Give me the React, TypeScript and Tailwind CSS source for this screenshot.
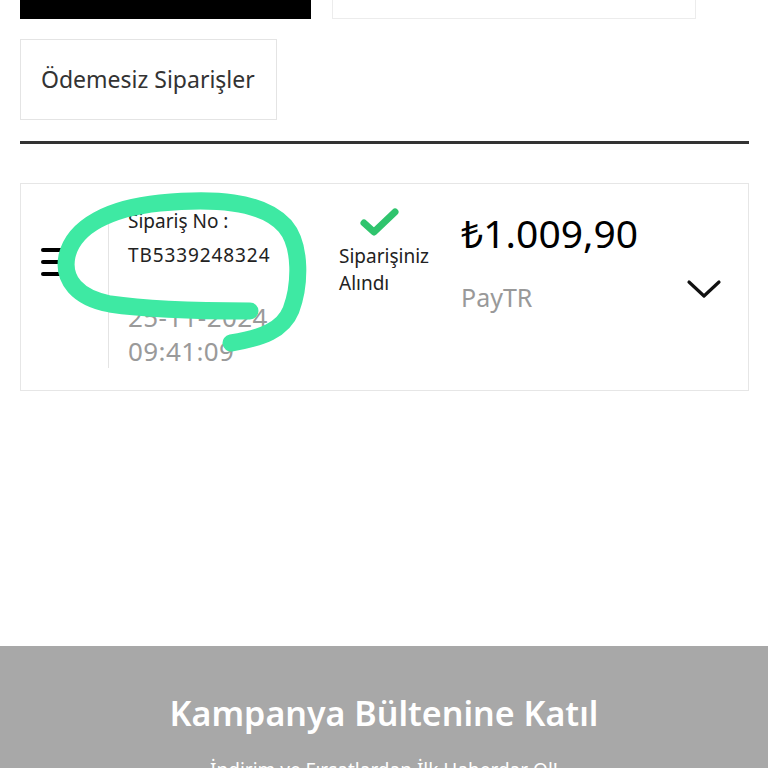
import React from "react";

const font = { fontFamily: '"Noto Sans", "DejaVu Sans", sans-serif' };

function Hamburger() {
  return (
    <div className="flex flex-col gap-[8px]">
      <div className="w-[26px] h-[4px] bg-black rounded-sm" />
      <div className="w-[26px] h-[4px] bg-black rounded-sm" />
      <div className="w-[29px] h-[4px] bg-black rounded-sm" />
    </div>
  );
}

export default function App() {
  return (
    <div
      className="relative w-[768px] h-[768px] overflow-hidden bg-white flex flex-col"
      style={font}
    >
      <div className="flex px-[20px] shrink-0">
        <div className="w-[291px] h-[19px] bg-black" />
        <div className="ml-[21px] w-[364px] h-[19px] border border-t-0 border-[#ececec]" />
      </div>

      <div className="shrink-0 ml-[20px] mt-[20px] w-[257px] h-[81px] border border-[#e4e4e4] flex items-center pl-[20px] text-[23px] text-[#333]">
        Ödemesiz Siparişler
      </div>

      <div className="shrink-0 mx-[20px] mr-[19px] mt-[21px] h-[3px] bg-[#333]" />

      <div className="shrink-0 mx-[20px] mr-[19px] mt-[39px] h-[208px] border border-[#e6e6e6] flex">
        <div className="w-[87px] pl-[20px] pt-[64px]">
          <Hamburger />
        </div>
        <div className="self-start mt-[36px] h-[148px] w-[1px] bg-[#e4e4e4]" />
        <div className="pl-[19px] pt-[24px] w-[230px]">
          <div className="text-[19px] leading-[26px] text-[#222]">Sipariş No :</div>
          <div className="mt-[8px] text-[19px] leading-[26px] text-[#222] tracking-[0.9px]">TB5339248324</div>
          <div className="mt-[32px] text-[26px] leading-[34px] text-[#9a9a9a] tracking-[0.4px]">25-11-2024</div>
          <div className="mt-[0px] text-[26px] leading-[34px] text-[#9a9a9a] tracking-[0.4px]">09:41:09</div>
        </div>
        <div className="w-[122px] pt-[22px]">
          <svg width="44" height="34" viewBox="0 0 44 34" className="ml-[19px]">
            <polyline
              points="6,17 16,26 37,6"
              fill="none"
              stroke="#2fc46d"
              strokeWidth="7"
              strokeLinecap="round"
              strokeLinejoin="round"
            />
          </svg>
          <div className="mt-[3px] text-[19px] leading-[27px] text-[#222]">
            Siparişiniz
            <br />
            Alındı
          </div>
        </div>
        <div className="flex-1 pt-[23px]">
          <div className="text-[39px] leading-[52px] text-black">₺1.009,90</div>
          <div className="mt-[21px] text-[25px] leading-[34px] text-[#999]">PayTR</div>
        </div>
        <div className="w-[62px] pt-[94px]">
          <svg width="36" height="22" viewBox="0 0 36 22">
            <polyline
              points="3,4 18,18 33,4"
              fill="none"
              stroke="#111"
              strokeWidth="3.2"
              strokeLinecap="round"
              strokeLinejoin="round"
            />
          </svg>
        </div>
      </div>

      <div className="mt-[255px] flex-1 bg-[#a8a8a8] flex flex-col items-center pt-[44px]">
        <div className="text-[34px] leading-[46px] font-semibold text-white">
          Kampanya Bültenine Katıl
        </div>
        <div className="mt-[20px] text-[19px] leading-[28px] text-white">
          İndirim ve Fırsatlardan İlk Haberdar Ol!
        </div>
      </div>

      <svg
        className="absolute left-0 top-0 pointer-events-none"
        width="768"
        height="768"
        viewBox="0 0 768 768"
      >
        <path
          d="M250,311 C200,311 150,310 110,304 C78,298 62,280 67,256 C74,226 110,208 160,203 C212,198 262,200 285,226 C302,246 300,286 291,310 C283,330 262,338 231,343"
          fill="none"
          stroke="#3ee9a3"
          strokeWidth="17"
          strokeLinecap="round"
          strokeLinejoin="round"
        />
      </svg>
    </div>
  );
}
